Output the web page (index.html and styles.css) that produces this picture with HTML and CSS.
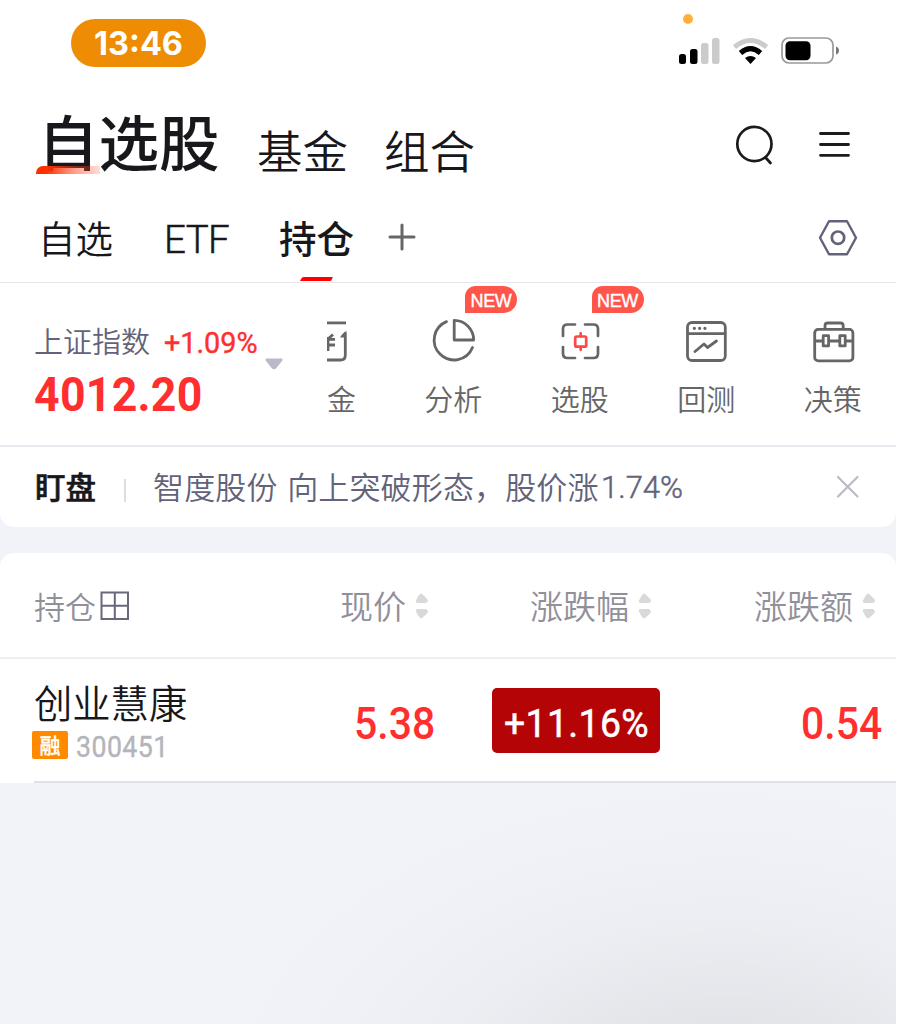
FILE: index.html
```
<!DOCTYPE html>
<html lang="zh-CN">
<head>
<meta charset="utf-8">
<title>自选股</title>
<link rel="stylesheet" href="styles.css">
</head>
<body>
<div class="app">
  <header class="status">
    <div class="clock"><span>13:46</span></div>
    <div class="signals">
      <i class="mic-dot"></i>
      <svg width="162" height="30" viewBox="0 0 162 30">
        <rect x="1" y="17" width="7" height="10" rx="2.5"/>
        <rect x="12" y="12" width="7.500" height="15" rx="2.500"/>
        <rect x="23" y="6" width="7.500" height="21" rx="2.500" fill="#cbcbcb"/>
        <rect x="34" y="1" width="7.500" height="26" rx="2.500" fill="#cbcbcb"/>
        <path d="M56.500 10Q72.500-3 88.500 10" fill="none" stroke="#cbcbcb" stroke-width="5"/>
        <path d="M62.500 16Q72.500 7.300 82.500 16" fill="none" stroke="#000" stroke-width="5"/>
        <path d="M67 21Q72.500 17 78 21L72.500 27Z"/>
        <rect x="104" y="1" width="51" height="25" rx="7" fill="none" stroke="#999" stroke-width="1.700"/>
        <rect x="107.500" y="4.200" width="25" height="19" rx="4.500"/>
        <path d="M158 9.500q3 1 3 4t-3 4z" fill="#777"/>
      </svg>
    </div>
  </header>

  <nav class="titles">
    <div class="title main">自选股<i class="brush"></i></div>
    <div class="title fund">基金</div>
    <div class="title combo">组合</div>
    <svg class="search" width="40" height="42" viewBox="0 0 40 42" fill="none" stroke="#1b1b1d" stroke-width="2.700" stroke-linecap="round"><circle cx="19.400" cy="19" r="17.100"/><path d="M30.500 32.500l5 5.500"/></svg>
    <svg class="menu" width="32" height="30" viewBox="0 0 32 30" stroke="#1b1b1d" stroke-width="2.800" stroke-linecap="round"><path d="M1.500 3.500h28M1.500 14.500h28M1.500 25.300h28"/></svg>
  </nav>

  <nav class="tabs">
    <div class="tab">自选</div>
    <div class="tab etf">ETF</div>
    <div class="tab active">持仓<i class="marker"></i></div>
    <svg class="plus" width="28" height="28" viewBox="0 0 28 28" stroke="#666" stroke-width="3" stroke-linecap="round"><path d="M2 14h24M14 2v24"/></svg>
    <svg class="hex" width="40" height="38" viewBox="0 0 40 38" fill="none" stroke="#62637a" stroke-width="2.400" stroke-linejoin="round"><path d="M11 2.200h18L38 18.700 29 35.300H11L2 18.700Z"/><circle cx="20" cy="18.700" r="6.200" stroke-width="2.700"/></svg>
  </nav>

  <section class="tools">
    <div class="index">
      <div class="index-head"><span class="index-name">上证指数</span><span class="num index-pct">+1.09%</span></div>
      <div class="num index-value">4012.20</div>
    </div>
    <svg class="caret" width="18" height="12" viewBox="0 0 18 12"><path d="M2 .5h14q2.500 0 1 2.500L11 10.500q-2 1.500-4 0L1 3Q-.5.500 2 .5Z" fill="#bab9ca"/></svg>
    <div class="strip">
      <div class="tool cut">
        <svg width="22" height="46" viewBox="0 0 22 46" fill="none" stroke="#666" stroke-width="2.800"><path d="M0 4.900h19"/><path d="M0 42h13.500q4.800 0 4.800-4.800V14.500"/><path d="M19.700 13q-4 1.500-6.700 6.500h5z" fill="#666" stroke="none"/><path d="M6 16.500L.5 21.500M0 21.300h8M0 27h8M1 19v14"/></svg>
        <span>金</span>
      </div>
      <div class="tool">
        <svg width="46" height="46" viewBox="0 0 46 46" fill="none" stroke="#666" stroke-width="2.800" stroke-linecap="round" stroke-linejoin="round"><path d="M16.500 3.600A19.900 19.900 0 1 0 42.500 29.500"/><path d="M24.200 2.400A19.600 19.600 0 0 1 43.700 22H24.200Z"/></svg>
        <span>分析</span><b class="badge">NEW</b>
      </div>
      <div class="tool">
        <svg width="46" height="46" viewBox="0 0 46 46" fill="none" stroke="#666" stroke-width="2.700" stroke-linecap="round"><path d="M6 18V11q0-4.500 4.500-4.500H18M28 6.500h8.500Q41 6.500 41 11v7M41 29v6.500q0 4.500-4.500 4.500H28M18 40h-7.500Q6 40 6 35.500V29"/><g stroke="#ff4848"><rect x="18.200" y="18.500" width="11" height="10.200" rx="1.500"/><path d="M23.700 15.300v3M23.700 29v2.800"/></g></svg>
        <span>选股</span><b class="badge">NEW</b>
      </div>
      <div class="tool">
        <svg width="46" height="46" viewBox="0 0 46 46" fill="none" stroke="#666" stroke-width="2.800" stroke-linecap="round" stroke-linejoin="round"><rect x="4.500" y="4.500" width="37.800" height="38" rx="4.500"/><path d="M5 15.700h37M12 33.500l9-7.500 3.500 3.500L33.500 23"/><path d="M11.300 10.300h.1M16.600 10.300h.1M21.900 10.300h.1" stroke-width="3.200"/></svg>
        <span>回测</span>
      </div>
      <div class="tool">
        <svg width="46" height="46" viewBox="0 0 46 46" fill="none" stroke="#666" stroke-width="2.800" stroke-linejoin="round"><rect x="4.700" y="11.400" width="38.200" height="31.500" rx="3.500"/><path d="M15 11V7.800q0-2.800 2.800-2.800h12.600q2.800 0 2.800 2.800V11M5 23h8M19 23h10.500M35.500 23H43"/><path d="M13.200 17.700h5.400v10.200h-5.400zM29.800 17.700h5.400v10.200h-5.400z"/></svg>
        <span>决策</span>
      </div>
    </div>
  </section>

  <section class="notice">
    <strong>盯盘</strong><i class="bar"></i>
    <p>智度股份 向上突破形态，股价涨</p><span class="num notice-num">1.74%</span>
    <svg class="close" width="24" height="24" viewBox="0 0 24 24" stroke="#bcbac9" stroke-width="2.200" stroke-linecap="round"><path d="M2 2l19.500 19.500M21.500 2L2 21.500"/></svg>
  </section>

  <section class="table">
    <div class="thead">
      <div class="th hold">持仓<svg width="30" height="30" viewBox="0 0 30 30" fill="none" stroke="#676879" stroke-width="2"><path d="M1.500 1.500h26.500v26.500H1.500ZM14.800 1.500V28M1.500 14.800H28"/></svg></div>
      <div class="th price">现价<svg class="sort" width="14" height="26" viewBox="0 0 14 26"><path d="M1 7.500Q5-1 7 1q6 5 6 6.500T11 10H3Q0 10 1 7.500ZM1 18.500Q5 27 7 25q6-5 6-6.500T11 16H3Q0 16 1 18.500Z"/></svg></div>
      <div class="th pct">涨跌幅<svg class="sort" width="14" height="26" viewBox="0 0 14 26"><path d="M1 7.500Q5-1 7 1q6 5 6 6.500T11 10H3Q0 10 1 7.500ZM1 18.500Q5 27 7 25q6-5 6-6.500T11 16H3Q0 16 1 18.500Z"/></svg></div>
      <div class="th diff">涨跌额<svg class="sort" width="14" height="26" viewBox="0 0 14 26"><path d="M1 7.500Q5-1 7 1q6 5 6 6.500T11 10H3Q0 10 1 7.500ZM1 18.500Q5 27 7 25q6-5 6-6.500T11 16H3Q0 16 1 18.500Z"/></svg></div>
    </div>
    <div class="stock">
      <div class="who">
        <div class="name">创业慧康</div>
        <div class="meta"><span class="margin-tag">融</span><span class="num code">300451</span></div>
      </div>
      <div class="cell cell-price"><span class="num quote">5.38</span></div>
      <div class="cell chip"><span class="num chip-num">+11.16%</span></div>
      <div class="cell cell-diff"><span class="num quote">0.54</span></div>
    </div>
  </section>
  <main class="empty"></main>
</div>
</body>
</html>
```
FILE: styles.css
```
* { box-sizing: border-box; }
body {
  margin: 0;
  background: #fff;
  font-family: "Noto Sans CJK SC", sans-serif;
  font-weight: 350;
  color: #17171c;
}
i, b, strong { font-style: normal; }
svg { display: block; flex: none; }
.app {
  width: 896px;
  height: 1024px;
  display: flex;
  flex-direction: column;
  background: #f1f3f8;
  overflow: hidden;
}
.app > * { flex: none; }
.num {
  display: block;
  width: max-content;
  font-family: Roboto, sans-serif;
  font-weight: 400;
  color: #ff2f30;
  transform-origin: left center;
  white-space: nowrap;
}

/* status bar */
.status {
  height: 90px;
  background: #fff;
  display: flex;
  justify-content: space-between;
  padding: 19px 56px 0 71px;
}
.clock {
  width: 135px;
  height: 48px;
  border-radius: 24px;
  background: #ee8d03;
  color: #fff;
  font: 650 32.500px/50px Inter, sans-serif;
  text-align: center;
}
.signals { position: relative; padding-top: 18px; }
.mic-dot {
  position: absolute;
  left: 5px;
  top: -5px;
  width: 10px;
  height: 10px;
  border-radius: 50%;
  background: #ffb03c;
}

/* top titles */
.titles { height: 100px; background: #fff; display: flex; padding-left: 38px; }
.title { white-space: nowrap; }
.main {
  position: relative;
  width: 219px;
  font-size: 60.500px;
  font-weight: 500;
  line-height: 100px;
}
.brush {
  position: absolute;
  left: -2px;
  top: 76px;
  width: 64px;
  height: 8px;
  border-radius: 7px 0 0 0;
  background: linear-gradient(90deg, #ff3000 15%, rgba(255, 60, 20, .5) 60%, rgba(255, 90, 60, .2));
}
.fund, .combo { width: 127px; font-size: 45.500px; line-height: 118px; }
.search { margin: 35px 0 0 224px; }
.menu { margin: 40px 0 0 44px; }

/* tabs */
.tabs {
  height: 93px;
  background: #fff;
  border-bottom: 1px solid #e6e7ef;
  display: flex;
  padding-left: 38px;
}
.tab { font-size: 37.500px; line-height: 94px; width: 126px; white-space: nowrap; }
.etf { width: 115px; font-family: Roboto, sans-serif; font-weight: 300; font-size: 38.500px; letter-spacing: -.6px; line-height: 99px; -webkit-text-stroke: .5px #17171c; }
.active { position: relative; width: 109px; font-weight: 500; }
.marker {
  position: absolute;
  left: 22px;
  top: 87px;
  width: 31px;
  height: 4px;
  border-radius: 2px 0 1px 0;
  background: #f00;
  transform: skewX(-25deg);
}
.plus { margin-top: 33px; }
.hex { margin: 29px 0 0 402px; }

/* index and tool strip */
.tools {
  height: 164px;
  background: #fff;
  border-bottom: 2px solid #e8e8f1;
  display: flex;
  padding-left: 34px;
}
.index { width: 231px; padding-top: 36px; }
.index-head { display: flex; height: 44px; line-height: 42px; }
.index-name { width: 130px; font-size: 29px; color: #62637a; }
.index-pct { font-size: 30px; line-height: 48px; transform: scaleX(.96); -webkit-text-stroke: .4px #ff2f30; }
.index-value { font-size: 48px; font-weight: 700; line-height: 63px; letter-spacing: .3px; transform: scaleX(.93); }
.caret { margin-top: 75px; }
.strip { display: flex; margin-left: 43px; }
.tool {
  position: relative;
  width: 126.500px;
  padding-top: 35px;
  display: flex;
  flex-direction: column;
  align-items: center;
}
.tool span { font-size: 29px; line-height: 40px; margin-top: 14px; color: #666; white-space: nowrap; }
.tool.cut { width: 64px; padding-left: 1px; align-items: flex-start; }
.badge {
  position: absolute;
  left: 75px;
  top: 3px;
  width: 52px;
  height: 27px;
  border-radius: 11px 14px 14px 0;
  background: #ff554b;
  color: #fff;
  font: 400 18px/31px "Liberation Sans", sans-serif;
  -webkit-text-stroke: .4px #fff;
  letter-spacing: -.4px;
  text-align: center;
}

/* notice */
.notice {
  height: 80px;
  background: #fff;
  border-radius: 0 0 14px 14px;
  display: flex;
  padding-left: 35px;
  line-height: 78px;
}
.notice strong { font-size: 30.500px; font-weight: 500; width: 89px; -webkit-text-stroke: .6px #17171c; }
.bar { width: 2px; height: 23px; margin: 32px 27px 0 0; background: #ddd; }
.notice p { margin: 0; width: 448px; font-size: 31px; letter-spacing: .15px; word-spacing: 2.500px; color: #62637a; white-space: nowrap; }
.notice-num { color: #62637a; font-size: 32px; font-weight: 300; line-height: 81px; transform: scaleX(.97); -webkit-text-stroke: .5px #62637a; }
.close { margin: 28px 36px 0 auto; }

/* holdings table */
.table { margin-top: 26px; background: #fff; border-radius: 14px 14px 0 0; height: 230px; }
.thead { height: 106px; border-bottom: 2px solid #eeeff5; display: flex; padding-left: 34px; }
.th { display: flex; align-items: center; color: #909099; font-size: 33px; line-height: 105px; white-space: nowrap; }
.hold { width: 306px; font-size: 31px; gap: 4px; }
.hold svg { margin-top: 2px; }
.price { width: 190px; }
.pct { width: 224px; }
.sort { margin-left: 9px; margin-top: 2px; fill: #d9d9d9; }
.stock {
  height: 124px;
  margin-left: 34px;
  border-bottom: 2px solid #e1e1ea;
  display: flex;
}
.who { width: 320px; padding-top: 19px; }
.name { font-size: 38.300px; line-height: 48px; }
.meta { display: flex; margin: 5px 0 0 -2px; }
.margin-tag {
  width: 36px;
  height: 28px;
  border-radius: 2px;
  background: #ff8a00;
  color: #fff;
  font-size: 21px;
  font-weight: 500;
  line-height: 27px;
  text-align: center;
  -webkit-text-stroke: .3px #fff;
}
.code { margin-left: 8px; font-size: 30px; line-height: 32px; letter-spacing: .5px; color: #b4b5bb; transform: scaleX(.89); -webkit-text-stroke: .4px #b4b5bb; }
.cell-price { width: 138px; }
.quote { font-size: 44px; font-weight: 500; line-height: 131px; transform: scaleX(.93); }
.chip {
  width: 168px;
  height: 65px;
  margin-top: 29px;
  padding-left: 12px;
  border-radius: 5px;
  background: #b40406;
}
.chip-num { color: #fff; font-size: 38.500px; line-height: 71px; letter-spacing: .4px; transform: scaleX(.97); -webkit-text-stroke: .5px #fff; }
.cell-diff { margin-left: 141px; }

.empty {
  height: 241px;
  background: radial-gradient(ellipse 520px 330px at 725px 320px, rgba(0, 0, 0, .09), rgba(0, 0, 0, .06) 27%, rgba(0, 0, 0, .022) 55%, rgba(0, 0, 0, .007) 78%, transparent);
}
```
